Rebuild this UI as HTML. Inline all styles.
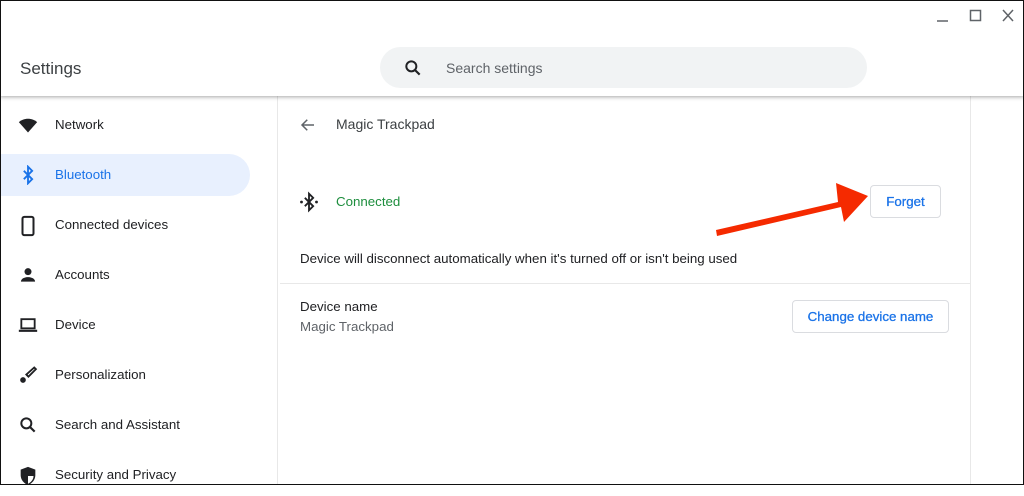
<!DOCTYPE html>
<html><head><meta charset="utf-8"><style>
*{margin:0;padding:0;box-sizing:border-box}
body{width:1024px;height:485px;overflow:hidden;background:#fff;font-family:"Liberation Sans",sans-serif;position:relative}
.frame{position:absolute;inset:0;border:1px solid #111;pointer-events:none;z-index:10}
.top{position:absolute;left:0;top:0;width:1024px;height:96px;background:#fff;box-shadow:0 1px 4px rgba(0,0,0,.35);z-index:5}
.title{position:absolute;left:20px;top:59px;font-size:17px;color:#3c4043}
.search{position:absolute;left:380px;top:47px;width:487px;height:41px;border-radius:21px;background:#f1f3f4}
.search span{position:absolute;left:66px;top:13px;font-size:14px;color:#5f6368}
.side{position:absolute;left:0;top:96px;width:278px;height:389px;border-right:1px solid #e8e8e8}
.item{position:absolute;left:0;height:42px;width:250px;font-size:13.3px;color:#202124}
.item .t{position:absolute;left:55px;top:13px}
.item svg{position:absolute;left:17px;top:11px}
.sel{background:#e8f0fe;border-radius:0 21px 21px 0;color:#1a73e8}
.main{position:absolute;left:278px;top:96px;width:693px;height:389px;border-right:1px solid #e8e8e8}
.btn{position:absolute;border:1px solid #dadce0;border-radius:4px;color:#1a73e8;font-size:13.3px;text-align:center;background:#fff;-webkit-text-stroke:0.3px #1a73e8}
</style></head><body>
<div class="top">
<div class="title">Settings</div>
<div class="search"><svg style="position:absolute;left:23px;top:11px" width="20" height="20" viewBox="0 0 24 24"><circle cx="10" cy="10" r="6" fill="none" stroke="#202124" stroke-width="2.4"/><path d="M14.5 14.5L20 20" stroke="#202124" stroke-width="2.6"/></svg><span>Search settings</span></div>
<svg style="position:absolute;left:934px;top:8px" width="84" height="16" viewBox="0 0 84 16"><path d="M3 13h11" stroke="#5f6368" stroke-width="1.5"/><rect x="36.5" y="2.5" width="10" height="10" fill="none" stroke="#5f6368" stroke-width="1.5"/><path d="M69 2l10 11M79 2L69 13" stroke="#5f6368" stroke-width="1.5"/></svg>
</div>
<div class="side">
<div class="item" style="top:8px"><svg width="22" height="20" viewBox="0 0 24 24"><path d="M12 21L1 8.5C4 6 8 4.5 12 4.5S20 6 23 8.5z" fill="#202124"/></svg><span class="t">Network</span></div>
<div class="item sel" style="top:58px"><svg width="22" height="20" viewBox="0 0 24 24"><path d="M7 7l10 10-5 5V2l5 5L7 17" fill="none" stroke="#1a73e8" stroke-width="2.2"/></svg><span class="t">Bluetooth</span></div>
<div class="item" style="top:108px"><svg width="22" height="22" viewBox="0 0 24 24"><rect x="6" y="2" width="12" height="20" rx="2" fill="none" stroke="#202124" stroke-width="2.2"/></svg><span class="t">Connected devices</span></div>
<div class="item" style="top:158px"><svg width="22" height="20" viewBox="0 0 24 24"><circle cx="12" cy="8" r="4.2" fill="#202124"/><path d="M3.5 20c0-4 5-5.5 8.5-5.5s8.5 1.5 8.5 5.5z" fill="#202124"/></svg><span class="t">Accounts</span></div>
<div class="item" style="top:208px"><svg width="22" height="20" viewBox="0 0 24 24"><rect x="4" y="5" width="16" height="11" fill="none" stroke="#202124" stroke-width="2.2"/><path d="M1 19h22" stroke="#202124" stroke-width="2.6"/></svg><span class="t">Device</span></div>
<div class="item" style="top:258px"><svg width="22" height="20" viewBox="0 0 24 24"><path d="M19.5 3l2 2-9 9-2.5-2.5z" fill="none" stroke="#202124" stroke-width="2.2"/><circle cx="6" cy="18" r="3.4" fill="#202124"/></svg><span class="t">Personalization</span></div>
<div class="item" style="top:308px"><svg width="22" height="20" viewBox="0 0 24 24"><circle cx="10" cy="10" r="6" fill="none" stroke="#202124" stroke-width="2.4"/><path d="M14.5 14.5L20 20" stroke="#202124" stroke-width="2.6"/></svg><span class="t">Search and Assistant</span></div>
<div class="item" style="top:358px"><svg width="22" height="22" viewBox="0 0 24 24"><path d="M12 2l8 3v6c0 5-3.5 9-8 11-4.5-2-8-6-8-11V5z" fill="#202124"/><path d="M12 4v8h6c0 4-3 7-6 8.5z" fill="#fff"/></svg><span class="t">Security and Privacy</span></div>
</div>
<div class="main">
<svg style="position:absolute;left:21px;top:20px" width="18" height="18" viewBox="0 0 24 24"><path d="M20 12H5M11 5l-7 7 7 7" fill="none" stroke="#5f6368" stroke-width="2"/></svg>
<div style="position:absolute;left:58px;top:20px;font-size:14px;color:#3c4043">Magic Trackpad</div>
<svg style="position:absolute;left:21px;top:95px" width="20" height="22" viewBox="0 0 24 24"><path d="M7 7l10 10-5 5V2l5 5L7 17" fill="none" stroke="#202124" stroke-width="2.2"/><circle cx="3" cy="12" r="1.7" fill="#202124"/><circle cx="21" cy="12" r="1.7" fill="#202124"/></svg>
<div style="position:absolute;left:58px;top:98px;font-size:13.3px;color:#1e8e3e">Connected</div>
<div class="btn" style="left:592px;top:89px;width:71px;height:33px;line-height:31px">Forget</div>
<div style="position:absolute;left:22px;top:155px;font-size:13.3px;color:#202124">Device will disconnect automatically when it's turned off or isn't being used</div>
<div style="position:absolute;left:2px;top:187px;width:691px;height:1px;background:#e8e8e8"></div>
<div style="position:absolute;left:22px;top:203px;font-size:13.3px;color:#202124">Device name</div>
<div style="position:absolute;left:22px;top:223px;font-size:13.3px;color:#5f6368">Magic Trackpad</div>
<div class="btn" style="left:514px;top:204px;width:157px;height:33px;line-height:31px">Change device name</div>
</div>
<svg style="position:absolute;left:0;top:0;z-index:6" width="1024" height="485"><path d="M716 230L838 202L836 183L868 196L844 222L841 207L717 236Z" fill="#f52a00"/></svg>
<div class="frame"></div>
</body></html>
